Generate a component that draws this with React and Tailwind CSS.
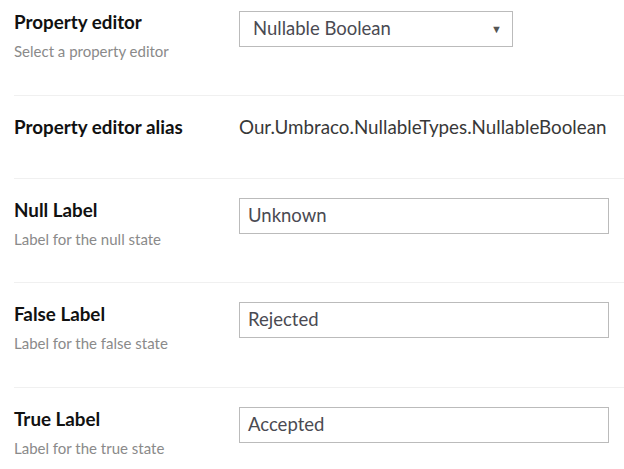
import React from 'react';

const font = { fontFamily: 'Lato, "Open Sans", sans-serif' };

const Label = ({ title, desc }) => (
    <div className="w-[225px] shrink-0">
        <div className="text-[18.8px] font-bold leading-[22px] text-[#111]">{title}</div>
        {desc && <div className="mt-[9px] text-[15px] leading-[18px] text-[#8a8a8a]">{desc}</div>}
    </div>
);

const TextInput = ({ value }) => (
    <div className="w-[370px] h-[36px] border border-[#bbbbbb] flex items-center px-[8px] text-[18.5px] text-[#4a4a52]">
        {value}
    </div>
);

export default function App() {
    return (
        <div className="w-[624px] h-[469px] bg-white overflow-hidden pl-[14px]" style={font}>
            {/* property editor picker */}
            <div className="flex pt-[11px] h-[96px] border-b border-[#f0f0f0]">
                <Label title="Property editor" desc="Select a property editor" />
                <div className="w-[274px] h-[36px] border border-[#bbbbbb] flex items-center justify-between pl-[13px] pr-[10px] text-[18.5px] text-[#4a4a52]">
                    <span>Nullable Boolean</span>
                    <span className="text-[11px] text-[#555]">▼</span>
                </div>
            </div>

            <div className="flex pt-[20px] h-[83px] border-b border-[#f0f0f0]">
                <Label title="Property editor alias" />
                <div className="text-[18.8px] leading-[22px] text-[#383838]">Our.Umbraco.NullableTypes.NullableBoolean</div>
            </div>

            {[
                ['Null Label', 'Label for the null state', 'Unknown'],
                ['False Label', 'Label for the false state', 'Rejected'],
                ['True Label', 'Label for the true state', 'Accepted'],
            ].map(([t, d, v], i) => (
                <div key={t} className={`flex pt-[19px] ${i === 0 ? 'h-[104px]' : 'h-[105px]'} ${i < 2 ? 'border-b border-[#f0f0f0]' : ''}`}>
                    <div className="pt-[1px]">
                        <Label title={t} desc={d} />
                    </div>
                    <TextInput value={v} />
                </div>
            ))}
        </div>
    );
}
